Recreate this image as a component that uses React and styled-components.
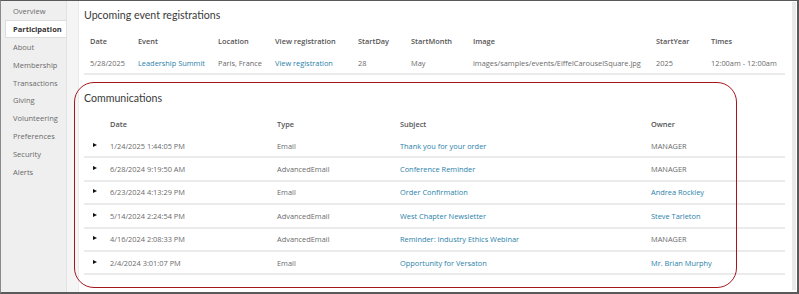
import React from "react";
import styled, { createGlobalStyle } from "styled-components";

const GlobalStyle = createGlobalStyle`
  html, body {
    margin: 0;
    padding: 0;
    background: #ffffff;
  }
  body {
    font-family: "Open Sans", "Liberation Sans", sans-serif;
  }
`;

const navItems = [
  "Overview",
  "Participation",
  "About",
  "Membership",
  "Transactions",
  "Giving",
  "Volunteering",
  "Preferences",
  "Security",
  "Alerts",
];

const eventCols = "48px 80px 57px 83px 53px 62px 183px 55px 1fr";
const commCols = "20px 167px 123px 251px 1fr";

const events = [
  {
    date: "5/28/2025",
    event: "Leadership Summit",
    location: "Paris, France",
    view: "View registration",
    day: "28",
    month: "May",
    image: "images/samples/events/EiffelCarouselSquare.jpg",
    year: "2025",
    times: "12:00am - 12:00am",
  },
];

const communications = [
  { date: "1/24/2025 1:44:05 PM", type: "Email", subject: "Thank you for your order", owner: "MANAGER", ownerLink: false },
  { date: "6/28/2024 9:19:50 AM", type: "AdvancedEmail", subject: "Conference Reminder", owner: "MANAGER", ownerLink: false },
  { date: "6/23/2024 4:13:29 PM", type: "Email", subject: "Order Confirmation", owner: "Andrea Rockley", ownerLink: true },
  { date: "5/14/2024 2:24:54 PM", type: "AdvancedEmail", subject: "West Chapter Newsletter", owner: "Steve Tarleton", ownerLink: true },
  { date: "4/16/2024 2:08:33 PM", type: "AdvancedEmail", subject: "Reminder: Industry Ethics Webinar", owner: "MANAGER", ownerLink: false },
  { date: "2/4/2024 3:01:07 PM", type: "Email", subject: "Opportunity for Versaton", owner: "Mr. Brian Murphy", ownerLink: true },
];

const App = () => {
  return (
    <>
      <GlobalStyle />
      <Frame>
        <Sidebar>
          {navItems.map((item) => (
            <NavItem key={item} $active={item === "Participation"}>
              {item}
            </NavItem>
          ))}
        </Sidebar>
        <Gutter />
        <Main>
          <SectionTitle>Upcoming event registrations</SectionTitle>
          <Table>
            <Row $cols={eventCols}>
              {["Date", "Event", "Location", "View registration", "StartDay", "StartMonth", "Image", "StartYear", "Times"].map((h) => (
                <HeadCell key={h}>{h}</HeadCell>
              ))}
            </Row>
            {events.map((e) => (
              <Row key={e.date} $cols={eventCols} $divider>
                <Cell>{e.date}</Cell>
                <Cell $link>{e.event}</Cell>
                <Cell>{e.location}</Cell>
                <Cell $link>{e.view}</Cell>
                <Cell>{e.day}</Cell>
                <Cell>{e.month}</Cell>
                <Cell>{e.image}</Cell>
                <Cell>{e.year}</Cell>
                <Cell>{e.times}</Cell>
              </Row>
            ))}
          </Table>

          <CommSection>
            <SectionTitle>Communications</SectionTitle>
            <Table>
              <Row $cols={commCols}>
                <HeadCell />
                <HeadCell>Date</HeadCell>
                <HeadCell>Type</HeadCell>
                <HeadCell>Subject</HeadCell>
                <HeadCell>Owner</HeadCell>
              </Row>
              {communications.map((c) => (
                <Row key={c.date} $cols={commCols} $divider $tall>
                  <ArrowCell>
                    <Arrow />
                  </ArrowCell>
                  <Cell>{c.date}</Cell>
                  <Cell>{c.type}</Cell>
                  <Cell $link>{c.subject}</Cell>
                  <Cell $link={c.ownerLink}>{c.owner}</Cell>
                </Row>
              ))}
            </Table>
          </CommSection>
        </Main>
        <Scrollbar />
        <Highlight />
      </Frame>
    </>
  );
};

const Frame = styled.div`
  position: relative;
  box-sizing: border-box;
  width: 799px;
  height: 294px;
  display: flex;
  border-top: 1px solid #5a5a5a;
  border-right: 2px solid #5a5a5a;
  border-bottom: 2px solid #5a5a5a;
  border-left: 1px solid #8a8a8a;
  overflow: hidden;
  background: #ffffff;
`;

const Sidebar = styled.nav`
  width: 65px;
  flex-shrink: 0;
  background: #efefef;
  padding-top: 1px;
  display: flex;
  flex-direction: column;
`;

const NavItem = styled.div`
  box-sizing: border-box;
  height: 17.9px;
  line-height: 16px;
  margin-left: 4px;
  padding-left: 7px;
  font-size: 7.5px;
  color: ${(p) => (p.$active ? "#333333" : "#6a6a6a")};
  font-weight: ${(p) => (p.$active ? 700 : 400)};
  background: ${(p) => (p.$active ? "#ffffff" : "transparent")};
  border: 1px solid ${(p) => (p.$active ? "#dddddd" : "transparent")};
  border-right: none;
`;

const Gutter = styled.div`
  width: 11px;
  flex-shrink: 0;
  background: #f5f5f5;
  border-left: 1px solid #e2e2e2;
  border-right: 1px solid #ebebeb;
`;

const Main = styled.main`
  flex: 1;
  padding: 5px 7px 0 5px;
  display: flex;
  flex-direction: column;
`;

const SectionTitle = styled.h2`
  margin: 0;
  height: 19px;
  line-height: 19px;
  font-family: "Lato", "Open Sans", sans-serif;
  font-weight: 400;
  font-size: 10.6px;
  color: #3a3a3a;
`;

const Table = styled.div`
  display: flex;
  flex-direction: column;
  margin-top: 4px;
`;

const Row = styled.div`
  display: grid;
  grid-template-columns: ${(p) => p.$cols};
  align-items: center;
  box-sizing: border-box;
  height: ${(p) => (p.$tall ? "23.4px" : "23px")};
  border-bottom: ${(p) => (p.$divider ? "2px solid #ebebeb" : "none")};
`;

const HeadCell = styled.div`
  padding-left: 6px;
  font-size: 7.4px;
  font-weight: 600;
  color: #555555;
  white-space: nowrap;
`;

const Cell = styled.div`
  padding-left: 6px;
  font-size: 7.4px;
  color: ${(p) => (p.$link ? "#2a82ab" : "#6b6b6b")};
  white-space: nowrap;
`;

const ArrowCell = styled.div`
  display: flex;
  justify-content: flex-end;
  padding-right: 7px;
`;

const Arrow = styled.span`
  width: 0;
  height: 0;
  border-top: 2.5px solid transparent;
  border-bottom: 2.5px solid transparent;
  border-left: 4px solid #111111;
  margin-top: -2px;
`;

const CommSection = styled.section`
  margin-top: 14px;
  display: flex;
  flex-direction: column;
`;

const Scrollbar = styled.div`
  width: 4px;
  flex-shrink: 0;
  margin: 1px 1px 2px 0;
  background: #e9e9e9;
`;

const Highlight = styled.div`
  position: absolute;
  left: 73px;
  top: 81px;
  width: 663px;
  height: 206px;
  box-sizing: border-box;
  border: 1.6px solid #a3161c;
  border-radius: 20px;
  pointer-events: none;
`;

export default App;
